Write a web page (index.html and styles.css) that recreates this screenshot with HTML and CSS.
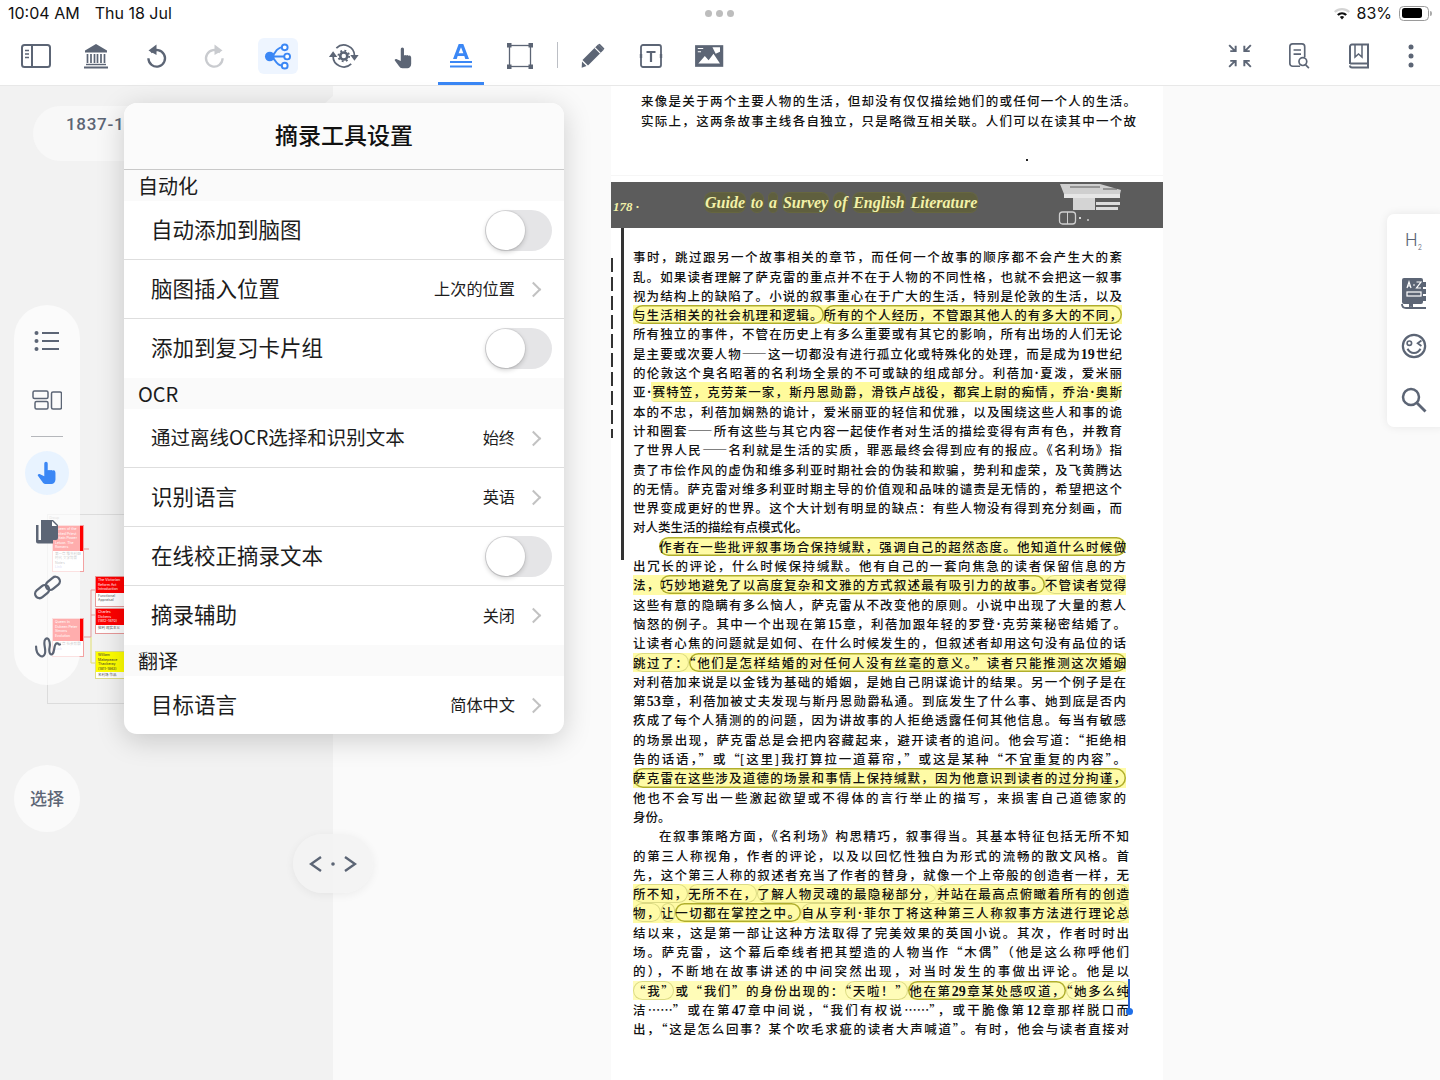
FILE: index.html
```html
<!DOCTYPE html>
<html lang="zh-CN">
<head>
<meta charset="utf-8">
<title>摘录工具设置</title>
<link rel="stylesheet" href="styles.css">
</head>
<body>
<div class="app">
  <header class="status">
    <div class="status-left"><span>10:04 AM</span><span>Thu 18 Jul</span></div>
    <div class="status-dots"><i></i><i></i><i></i></div>
    <div class="status-right">
      <svg class="wifi" viewBox="0 0 18 14"><path d="M1 5.2a11.6 11.6 0 0 1 16 0l-1.5 1.6a9.4 9.4 0 0 0-13 0z" fill="#d4d4d4"/><path d="M4 8.2a7.3 7.3 0 0 1 10 0l-1.6 1.6a5 5 0 0 0-6.8 0z" fill="#111"/><path d="M6.8 11a3.2 3.2 0 0 1 4.4 0L9 13.4z" fill="#111"/></svg>
      <span>83%</span>
      <span class="battery"><span class="battery-fill"></span></span>
      <span class="battery-nub"></span>
    </div>
  </header>

  <nav class="toolbar">
    <div class="tools">
      <button class="tool"><svg viewBox="0 0 32 26"><rect x="2" y="2" width="28" height="22" rx="2.5" fill="none" stroke="#5c6575" stroke-width="2"/><path d="M12 2v22" stroke="#5c6575" stroke-width="2"/><path d="M5 7.500h4M5 11h4M5 14.500h4" stroke="#5c6575" stroke-width="1.300"/></svg></button>
      <button class="tool"><svg viewBox="0 0 26 26"><path d="M13 1 2 7.500v2h22v-2z" fill="#5c6575"/><path d="M4.500 11v9M8 11v9M11.500 11v9M14.500 11v9M18 11v9M21.500 11v9" stroke="#5c6575" stroke-width="1.700"/><path d="M3 21.500h20" stroke="#5c6575" stroke-width="1.400"/><path d="M1 24.500h24" stroke="#5c6575" stroke-width="2"/></svg></button>
      <button class="tool"><svg viewBox="0 0 24 26"><path d="M7 9.300a8.300 8.300 0 1 1-2.600 6" fill="none" stroke="#5c6575" stroke-width="2.300"/><path d="M12.500 1.500v10.500L4.500 7.500z" fill="#5c6575"/></svg></button>
      <button class="tool"><svg viewBox="0 0 24 26"><path d="M17 9.300a8.300 8.300 0 1 0 2.600 6" fill="none" stroke="#c9cbcf" stroke-width="2.300"/><path d="M11.500 1.500v10.500l8-4.500z" fill="#c9cbcf"/></svg></button>
      <button class="tool tool-active"><svg viewBox="0 0 30 28"><circle cx="6" cy="14" r="5" fill="#3b87f5"/><path d="M6 14c6 0 5-9.500 13-9.500M6 14h15M6 14c6 0 5 9.500 13 9.500" fill="none" stroke="#3b87f5" stroke-width="2"/><circle cx="21.500" cy="4.500" r="3" fill="#fff" stroke="#3b87f5" stroke-width="2"/><circle cx="24" cy="14" r="3" fill="#fff" stroke="#3b87f5" stroke-width="2"/><circle cx="21.500" cy="23.500" r="3" fill="#fff" stroke="#3b87f5" stroke-width="2"/></svg></button>
      <button class="tool"><svg viewBox="0 0 34 28"><path d="M9 5.500A11.500 11.500 0 0 1 28.500 14M25 22.500A11.500 11.500 0 0 1 5.500 14" fill="none" stroke="#5c6575" stroke-width="1.900"/><path d="M1 15h9L5.500 9zM24 13h9l-4.500 6z" fill="#5c6575"/><circle cx="17" cy="14" r="3.800" fill="none" stroke="#5c6575" stroke-width="2.800"/><circle cx="17" cy="14" r="5.800" fill="none" stroke="#5c6575" stroke-width="2" stroke-dasharray="2 2.550"/></svg></button>
      <button class="tool tool-hand"><svg viewBox="0 0 22 26"><path d="M8 2.500a1.900 1.900 0 0 1 3.800 0V10l1.500-.4 1 .4 1.500-.4 1.200.6 1.500-.1c1.200.4 1.800 1.400 1.800 3v7c0 3-2 5-4.500 5H10c-2 0-3-.8-4-2.300l-5-6.700c-.7-1.400 1-2.700 2.400-1.700L8 16.500z" fill="#5c6575"/></svg></button>
      <button class="tool tool-a"><svg viewBox="0 0 24 26"><path d="M9.700 1h4.600L20 16h-3.700l-1-3H8.700l-1 3H4zm-.1 9.200h4.800L12 4.300z" fill="#3b87f5" fill-rule="evenodd"/><path d="M1 19h22M1 23.500h22" stroke="#3b87f5" stroke-width="1.800"/></svg></button>
      <button class="tool"><svg viewBox="0 0 26 26"><rect x="2.500" y="2.500" width="21" height="21" fill="none" stroke="#5c6575" stroke-width="1.300"/><path d="M0 0h4.500v4.500H0zM21.500 0H26v4.500h-4.500zM0 21.500h4.500V26H0zM21.500 21.500H26V26h-4.500z" fill="#5c6575"/></svg></button>
      <span class="tool-sep"></span>
      <button class="tool"><svg viewBox="0 0 26 26"><path d="M19 1.500 24.500 7 9 22.500l-5.500-5.500z" fill="#5c6575"/><path d="M19 1.500l1.700-.8 4.700 4.700-.9 1.600zM3 18.500l4.500 4.500-4.800 1.800z" fill="#5c6575"/><path d="M15.800 4.700l5.500 5.500" stroke="#fff" stroke-width="1.200"/></svg></button>
      <button class="tool"><svg viewBox="0 0 24 26"><rect x="2" y="2" width="20" height="22" rx="2" fill="none" stroke="#5c6575" stroke-width="1.800"/><path d="M7.500 8h9v2h-3.400v9h-2.200v-9H7.500z" fill="#5c6575"/><path d="M.8 11h2.400v4H.8zM20.800 11h2.400v4h-2.400z" fill="#5c6575"/></svg></button>
      <button class="tool"><svg viewBox="0 0 28 24"><path d="M1 2h26v20H1z" fill="#5c6575"/><path d="M4 19l6-7 3.500 4 4.500-6 6 9z" fill="#fff"/><path d="M17 4h7v4l-4 2z" fill="#fff"/><path d="M3.500 5h5M3.500 8h3" stroke="#fff" stroke-width="1"/></svg></button>
    </div>
    <div class="tools-right">
      <button class="tool"><svg viewBox="0 0 24 24"><path d="M2 2l5.500 5.500M3 7.500h5V2.500M22 2l-5.500 5.500M21 7.500h-5V2.500M2 22l5.500-5.500M3 16.500h5v5M22 22l-5.500-5.500M21 16.500h-5v5" fill="none" stroke="#5c6575" stroke-width="1.800"/></svg></button>
      <button class="tool"><svg viewBox="0 0 24 28"><path d="M13 25H5a3 3 0 0 1-3-3V4a3 3 0 0 1 3-3h10a3 3 0 0 1 3 3v11" fill="none" stroke="#5c6575" stroke-width="1.800"/><path d="M6 7.500h8M6 12h8" stroke="#5c6575" stroke-width="1.800"/><circle cx="16" cy="20" r="4.200" fill="#fff" stroke="#5c6575" stroke-width="1.800"/><path d="M19 23.500l3.500 3.500" stroke="#5c6575" stroke-width="1.800"/></svg></button>
      <button class="tool"><svg viewBox="0 0 22 26"><path d="M2 21V3.500A2 2 0 0 1 4 1.500h16v23H4A2 2 0 0 1 2 22.500" fill="none" stroke="#5c6575" stroke-width="2"/><path d="M2 20.500h18" stroke="#5c6575" stroke-width="2"/><path d="M7 2v12l3.500-3 3.500 3V2" fill="none" stroke="#5c6575" stroke-width="1.500"/></svg></button>
      <button class="tool"><svg viewBox="0 0 8 26"><circle cx="4" cy="4" r="2.500" fill="#5c6575"/><circle cx="4" cy="13" r="2.500" fill="#5c6575"/><circle cx="4" cy="22" r="2.500" fill="#5c6575"/></svg></button>
    </div>
    <span class="popover-arrow"></span>
  </nav>

  <main class="workspace">
    <section class="map">
      <div class="map-pill">1837-1901</div>

      <div class="mm-frame"></div>
      <svg class="mm-links" viewBox="0 0 124 200"><path d="M38 35h5M38 123h7M45 76V123M45 76h4M45 101h4" fill="none" stroke="#e39a9a" stroke-width="1"/><path d="M45 123V149h4" fill="none" stroke="#e0de70" stroke-width="1"/></svg>
      <span class="mm-tag">Group</span>
      <div class="mm-node mm-a"><div class="mm-title mm-red mm-tall">Queen of the United Priest Britain Power Leiuor. The Romans</div><div class="mm-body">第一章 维多利亚时代 文学背景 Notes<em>Link</em></div></div>
      <div class="mm-node mm-b"><div class="mm-title mm-red mm-tall">Queen in Dukeen Peter Simons Evolution</div><div class="mm-body">第二章 社会背景<em>Link</em></div></div>
      <div class="mm-node mm-c"><div class="mm-title mm-red">The Victorian Reform Act Introduction</div><div class="mm-body">Functional Appraisal</div></div>
      <div class="mm-node mm-d"><div class="mm-title mm-red">Charles Dickens (1812-1870)</div><div class="mm-body">批判 现实主义</div></div>
      <div class="mm-node mm-e"><div class="mm-title mm-yellow">William Makepeace Thackeray (1811-1863)</div><div class="mm-body">名利场 作品</div></div>

      <aside class="rail">
        <svg class="rail-icon" viewBox="0 0 26 22"><circle cx="2.500" cy="3" r="2" fill="#5c6575"/><circle cx="2.500" cy="11" r="2" fill="#5c6575"/><circle cx="2.500" cy="19" r="2" fill="#5c6575"/><path d="M8 3h17M8 11h17M8 19h17" stroke="#5c6575" stroke-width="1.800"/></svg>
        <svg class="rail-icon" viewBox="0 0 30 20"><rect x="1" y="1" width="15" height="7.500" rx="1.500" fill="none" stroke="#5c6575" stroke-width="1.500"/><rect x="3" y="11.500" width="13" height="7.500" rx="1.500" fill="none" stroke="#5c6575" stroke-width="1.500"/><rect x="19.500" y="2" width="10" height="17" rx="1.500" fill="none" stroke="#5c6575" stroke-width="1.500"/></svg>
        <span class="rail-sep"></span>
        <span class="rail-active"><svg viewBox="0 0 22 26"><path d="M8 2.500a1.900 1.900 0 0 1 3.800 0V10l1.500-.4 1 .4 1.500-.4 1.200.6 1.500-.1c1.200.4 1.800 1.400 1.800 3v7c0 3-2 5-4.500 5H10c-2 0-3-.8-4-2.300l-5-6.700c-.7-1.400 1-2.700 2.400-1.700L8 16.500z" fill="#3b87f5"/></svg></span>
        <svg class="rail-icon rail-copy" viewBox="0 0 24 26"><path d="M1 6h2.500v15H18v3.500H3A2 2 0 0 1 1 22.500z" fill="#5c6575"/><path d="M6 1h12l5 5v13a2 2 0 0 1-2 2H6z" fill="#5c6575"/><path d="M17 2v5h5z" fill="#fff"/></svg>
        <svg class="rail-icon rail-link" viewBox="0 0 26 26"><g fill="none" stroke="#5c6575" stroke-width="2.200" transform="rotate(-40 13 13)"><rect x="-1" y="8.500" width="15" height="8.500" rx="4.200"/><rect x="12" y="9" width="15" height="8.500" rx="4.200"/></g></svg>
        <svg class="rail-icon rail-wave" viewBox="0 0 26 26"><path d="M2 14c0 9 7 12 8.500 7S8 10 11 7s5 3 4 8 1 8 3 6 1-9 3.500-10 2 2 3.500 1" fill="none" stroke="#5c6575" stroke-width="2.100" stroke-linecap="round"/></svg>
      </aside>

      <button class="select-btn">选择</button>
    </section>

    <section class="gutter"></section>

    <article class="page">
      <div class="scan-top">
        <div class="line line-clip">与其说这部小说只是关于两个主要人物的生活，但事实上却有许多其他人物出现并</div>
        <div class="line">来像是关于两个主要人物的生活，但却没有仅仅描绘她们的或任何一个人的生活。</div>
        <div class="line">实际上，这两条故事主线各自独立，只是略微互相关联。人们可以在读其中一个故</div>
        <span class="speck"></span>
      </div>
      <div class="band">
        <span class="band-no">178 ·</span>
        <span class="band-title"><b>Guide</b> <b>to</b> <b>a</b> <b>Survey</b> <b>of</b> <b>English</b> <b>Literature</b></span>
        <svg class="band-bus" viewBox="0 0 65 43"><path d="M2 2h40l21 6-1 4H6z" fill="#cfcfcf"/><path d="M12 5h30M45 7h14" stroke="#5c5c5c" stroke-width="1"/><path d="M6 12h56v4H6z" fill="#e6e6e6"/><path d="M15 16h22v12H15z" fill="#d4d4d4"/><path d="M38 20h24v3H38zM38 25h22v3H38z" fill="#dcdcdc"/><rect x="1.500" y="30" width="16" height="12" rx="3" fill="none" stroke="#cfcfcf" stroke-width="1.300"/><path d="M9.500 30v12" stroke="#cfcfcf"/><circle cx="22" cy="36" r="1" fill="#fff"/><circle cx="30" cy="38" r="1" fill="#ccc"/></svg>
      </div>
      <div class="body-wrap">
        <span class="scan-bar"></span>
        <span class="scan-dash"></span>

        <div class="para para-a">
          <div class="line">事时，跳过跟另一个故事相关的章节，而任何一个故事的顺序都不会产生大的紊</div>
          <div class="line">乱。如果读者理解了萨克雷的重点并不在于人物的不同性格，也就不会把这一叙事</div>
          <div class="line">视为结构上的缺陷了。小说的叙事重心在于广大的生活，特别是伦敦的生活，以及</div>
          <div class="line mark"><span class="ol">与生活相关的社会机理和逻辑。</span><span class="ol">所有的个人经历，不管跟其他人的有多大的不同，</span></div>
          <div class="line">所有独立的事件，不管在历史上有多么重要或有其它的影响，所有出场的人们无论</div>
          <div class="line">是主要或次要人物——这一切都没有进行孤立化或特殊化的处理，而是成为<span class="sf">19</span>世纪</div>
          <div class="line">的伦敦这个臭名昭著的名利场全景的不可或缺的组成部分。利蓓加<span class="sf">·</span>夏泼，爱米丽</div>
          <div class="line">亚<span class="sf">·</span><span class="hl">赛特笠，克劳莱一家，斯丹恩勋爵，滑铁卢战役，都宾上尉的痴情，乔治<span class="sf">·</span>奥斯</span></div>
          <div class="line">本的不忠，利蓓加娴熟的诡计，爱米丽亚的轻信和优雅，以及围绕这些人和事的诡</div>
          <div class="line">计和圈套——所有这些与其它内容一起使作者对生活的描绘变得有声有色，并教育</div>
          <div class="line">了世界人民——名利就是生活的实质，罪恶最终会得到应有的报应。《名利场》指</div>
          <div class="line">责了市侩作风的虚伪和维多利亚时期社会的伪装和欺骗，势利和虚荣，及飞黄腾达</div>
          <div class="line">的无情。萨克雷对维多利亚时期主导的价值观和品味的谴责是无情的，希望把这个</div>
          <div class="line">世界变成更好的世界。这个大计划有明显的缺点：有些人物没有得到充分刻画，而</div>
          <div class="line line-end">对人类生活的描绘有点模式化。</div>
        </div>

        <div class="para para-b">
          <div class="line line-indent"><span class="ol ol-full">作者在一些批评叙事场合保持缄默，强调自己的超然态度。他知道什么时候做</span></div>
          <div class="line">出冗长的评论，什么时候保持缄默。他有自己的一套向焦急的读者保留信息的方</div>
          <div class="line mark"><span>法，</span><span class="ol">巧妙地避免了以高度复杂和文雅的方式叙述最有吸引力的故事。</span><span class="ol-lt">不管读者觉得</span></div>
          <div class="line">这些有意的隐瞒有多么恼人，萨克雷从不改变他的原则。小说中出现了大量的惹人</div>
          <div class="line">恼怒的例子。其中一个出现在第<span class="sf">15</span>章，利蓓加跟年轻的罗登<span class="sf">·</span>克劳莱秘密结婚了。</div>
          <div class="line">让读者心焦的问题就是如何、在什么时候发生的，但叙述者却用这句没有品位的话</div>
          <div class="line mark"><span class="ol-lt">跳过了：</span><span class="ol">“他们是怎样结婚的对任何人没有丝毫的意义。”读者只能推测这次婚姻</span></div>
          <div class="line">对利蓓加来说是以金钱为基础的婚姻，是她自己阴谋诡计的结果。另一个例子是在</div>
          <div class="line">第<span class="sf">53</span>章，利蓓加被丈夫发现与斯丹恩勋爵私通。到底发生了什么事、她到底是否内</div>
          <div class="line">疚成了每个人猜测的的问题，因为讲故事的人拒绝透露任何其他信息。每当有敏感</div>
          <div class="line">的场景出现，萨克雷总是会把内容藏起来，避开读者的追问。他会写道：“拒绝相</div>
          <div class="line">告的话语，”或“[这里]我打算拉一道幕帘，”或这是某种“不宜重复的内容”。</div>
          <div class="line mark"><span class="ol ol-full">萨克雷在这些涉及道德的场景和事情上保持缄默，因为他意识到读者的过分拘谨，</span></div>
          <div class="line">他也不会写出一些激起欲望或不得体的言行举止的描写，来损害自己道德家的</div>
          <div class="line line-end">身份。</div>
        </div>

        <div class="para para-c">
          <div class="line line-indent">在叙事策略方面，《名利场》构思精巧，叙事得当。其基本特征包括无所不知</div>
          <div class="line">的第三人称视角，作者的评论，以及以回忆性独白为形式的流畅的散文风格。首</div>
          <div class="line">先，这个第三人称的叙述者充当了作者的替身，就像一个上帝般的创造者一样，无</div>
          <div class="line mark"><span class="ol-lt">所不知，</span><span class="ol-lt">无所不在，</span><span class="ol-lt">了解人物灵魂的最隐秘部分，</span><span class="ol-lt">并站在最高点俯瞰着所有的创造</span></div>
          <div class="line mark"><span class="ol-lt">物，</span><span class="ol-lt">让</span><span class="ol">一切都在掌控之中。</span><span class="ol-lt">自从亨利<span class="sf">·</span>菲尔丁将这种第三人称叙事方法进行理论总</span></div>
          <div class="line">结以来，这是第一部让这种方法取得了完美效果的英国小说。其次，作者时时出</div>
          <div class="line">场。萨克雷，这个幕后牵线者把其塑造的人物当作“木偶”（他是这么称呼他们</div>
          <div class="line">的），不断地在故事讲述的中间突然出现，对当时发生的事做出评论。他是以</div>
          <div class="line mark mark-lt"><span class="ol-lt">“我”</span>或“我们”的身份出现的：<span class="ol-lt">“天啦！”</span><span class="ol">他在第<span class="sf">29</span>章某处感叹道，</span><span class="ol-lt">“她多么纯</span></div>
          <div class="line">洁……”或在第<span class="sf">47</span>章中间说，“我们有权说……”，或干脆像第<span class="sf">12</span>章那样脱口而</div>
          <div class="line">出，“这是怎么回事？某个吹毛求疵的读者大声喊道”。有时，他会与读者直接对</div>
        </div>
        <span class="sel-handle"></span>
      </div>
    </article>

    <section class="gutter-right"></section>
  </main>

  <div class="popover">
    <h2 class="pop-title">摘录工具设置</h2>
    <div class="pop-section">自动化</div>
    <div class="pop-row"><span class="pop-label">自动添加到脑图</span><span class="toggle"><i></i></span></div>
    <div class="pop-row"><span class="pop-label">脑图插入位置</span><span class="pop-value">上次的位置</span><span class="chev"></span></div>
    <div class="pop-row pop-last"><span class="pop-label">添加到复习卡片组</span><span class="toggle"><i></i></span></div>
    <div class="pop-section">OCR</div>
    <div class="pop-row"><span class="pop-label pop-label-sm">通过离线OCR选择和识别文本</span><span class="pop-value">始终</span><span class="chev"></span></div>
    <div class="pop-row"><span class="pop-label">识别语言</span><span class="pop-value">英语</span><span class="chev"></span></div>
    <div class="pop-row"><span class="pop-label">在线校正摘录文本</span><span class="toggle"><i></i></span></div>
    <div class="pop-row pop-last"><span class="pop-label">摘录辅助</span><span class="pop-value">关闭</span><span class="chev"></span></div>
    <div class="pop-section">翻译</div>
    <div class="pop-row pop-last pop-end"><span class="pop-label">目标语言</span><span class="pop-value">简体中文</span><span class="chev"></span></div>
  </div>

  <div class="nav-pill">
    <svg viewBox="0 0 48 18"><path d="M12 2 2 9l10 7M36 2l10 7-10 7" fill="none" stroke="#5c6575" stroke-width="2.400"/><circle cx="24" cy="9" r="1.800" fill="#5c6575"/></svg>
  </div>

  <aside class="side-panel">
    <span class="side-h">H<sub>2</sub></span>
    <svg class="side-icon" viewBox="0 0 26 32"><rect x="1" y="1" width="21" height="26" rx="2" fill="#5c6575"/><path d="M1 27c0 3 2 4 4 4h20" fill="none" stroke="#5c6575" stroke-width="1.800"/><path d="M8 27v4l2-1.500 2 1.500v-4z" fill="#5c6575"/><path d="M22 5h3v5h-3zM22 12h3v5h-3zM22 19h3v5h-3z" fill="#5c6575"/><rect x="6" y="15" width="14" height="4" fill="none" stroke="#fff" stroke-width="1.200"/><path d="M6 11l2-6 2 6M7 9h2M12 8h2M15.500 5H20l-4.500 6H20" fill="none" stroke="#fff" stroke-width="1.200"/></svg>
    <svg class="side-icon" viewBox="0 0 28 28"><circle cx="14" cy="14" r="12" fill="none" stroke="#5c6575" stroke-width="2.400"/><circle cx="9" cy="11" r="2.400" fill="none" stroke="#5c6575" stroke-width="1.800"/><path d="M22 8l-4 3 4 3" fill="none" stroke="#5c6575" stroke-width="2"/><path d="M7 17c3 6 11 6 14 0" fill="none" stroke="#5c6575" stroke-width="2.200"/></svg>
    <svg class="side-icon" viewBox="0 0 26 26"><circle cx="10" cy="10" r="8" fill="none" stroke="#5c6575" stroke-width="2.500"/><path d="M16 16l8.500 8.500" stroke="#5c6575" stroke-width="2.800"/></svg>
  </aside>
</div>
</body>
</html>
```

FILE: styles.css
```css
* { box-sizing: border-box; }
html, body { margin: 0; padding: 0; }
body { font-family: "Inter", "Noto Sans CJK SC", sans-serif; color: #111; background: #fff; }
button { border: 0; background: none; padding: 0; font: inherit; color: inherit; }

.app { position: relative; width: 1440px; height: 1080px; overflow: hidden; display: flex; flex-direction: column; }

/* status bar */
.status { height: 28px; flex: none; display: flex; align-items: center; justify-content: space-between; padding: 0 8px 2px 8px; font-size: 16px; position: relative; background: #fff; z-index: 3; }
.status-left { display: flex; gap: 15px; }
.status-dots { position: absolute; left: 705px; top: 10px; display: flex; gap: 4px; }
.status-dots i { width: 7px; height: 7px; border-radius: 50%; background: #bdbdbd; }
.status-right { display: flex; align-items: center; gap: 6px; }
.wifi { width: 18px; height: 14px; }
.battery { width: 30px; height: 15px; border: 1px solid #9a9a9a; border-radius: 4.5px; padding: 1.500px; display: block; margin-left: 1px; }
.battery-fill { display: block; width: 83%; height: 100%; background: #000; border-radius: 2.500px; }
.battery-nub { width: 2px; height: 5px; background: #aaa; margin-left: -5px; border-radius: 0 2px 2px 0; }

/* toolbar */
.toolbar { height: 58px; flex: none; display: flex; justify-content: space-between; align-items: stretch; background: #fff; border-bottom: 1px solid #e8e8e8; position: relative; z-index: 3; }
.tools { margin-left: 6px; display: grid; grid-template-columns: 60px 60px 60px 58px 68px 64px 54px 62px 56px 18px 52px 66px 50px; height: 57px; }
.tools-right { display: grid; grid-template-columns: 60px 58px 62px 42px; margin-right: 8px; height: 57px; }
.tool { position: relative; display: flex; align-items: center; justify-content: center; height: 56px; }
.tool svg { display: block; height: 26px; width: auto; }
.tool-hand svg { height: 22px; margin-top: 3px; }
.tool-active::before { content: ""; position: absolute; left: 14px; top: 10px; width: 40px; height: 36px; background: #eef5ff; border-radius: 6px; }
.tool-active svg { position: relative; height: 27px; }
.tool-a::after { content: ""; position: absolute; left: 8px; right: 8px; bottom: -1px; height: 3px; background: #3b87f5; }
.tool-sep { width: 1px; height: 26px; margin: 14px 0 0 9px; background: #bcbfc5; }
.popover-arrow { position: absolute; left: 324px; top: 58px; width: 0; height: 0; border-left: 20px solid transparent; border-right: 20px solid transparent; border-bottom: 18px solid #fafafa; z-index: 5; }

/* workspace */
.workspace { flex: 1; display: flex; min-height: 0; }
.map { position: relative; width: 333px; background: #f2f2f2; flex: none; }
.gutter { width: 278px; background: #fafafa; flex: none; }
.gutter-right { flex: 1; background: #fafafa; }

.map-pill { position: absolute; left: 33px; top: 20px; width: 200px; height: 55px; border-radius: 28px; background: #f8f8f8; padding: 8px 0 0 33px; font-family: "Roboto", sans-serif; font-weight: 500; font-size: 17px; letter-spacing: .7px; color: #5c6575; }

/* mind map */
.mm-frame { position: absolute; left: 47px; top: 428px; width: 140px; height: 190px; border: 1px solid #dcdcdc; }
.mm-links { position: absolute; left: 46px; top: 428px; width: 124px; height: 200px; }
.mm-tag { position: absolute; left: 49px; top: 430px; font-size: 3.500px; color: #999; }
.mm-node { position: absolute; overflow: hidden; background: #fff; font-size: 3.500px; line-height: 1.3; border: 1px solid; }
.mm-title { padding: 1px 2px; }
.mm-body { padding: 1px 2px; color: #555; }
.mm-body em { display: block; color: #8a8ae0; font-style: normal; }
.mm-tall { min-height: 22px; }
.mm-red { background: #f00; color: #fff; }
.mm-yellow { background: #ff0; color: #333; }
.mm-a { left: 52px; top: 439px; width: 32px; height: 47px; border-color: #f3a2a2; }
.mm-b { left: 52px; top: 532px; width: 32px; height: 39px; border-color: #f3a2a2; }
.mm-c { left: 95px; top: 490px; width: 29px; height: 31px; border-color: #e89999; border-right: 0; }
.mm-d { left: 95px; top: 522px; width: 29px; height: 26px; border-color: #e89999; border-right: 0; }
.mm-e { left: 95px; top: 565px; width: 29px; height: 28px; border-color: #dddd88; border-right: 0; }

/* left rail */
.rail { position: absolute; left: 14px; top: 219px; width: 66px; height: 380px; border-radius: 33px; background: rgba(255,255,255,.68); display: flex; flex-direction: column; align-items: center; z-index: 1; padding-top: 25px; }
.rail-icon { display: block; width: 26px; height: 22px; flex: none; }
.rail-icon:nth-child(2) { width: 30px; height: 20px; margin-top: 38px; }
.rail-sep { width: 32px; height: 1px; background: #b5b7bb; margin-top: 26px; flex: none; }
.rail-active { width: 44px; height: 44px; border-radius: 50%; background: #e8f3ff; margin-top: 14px; display: flex; align-items: center; justify-content: center; flex: none; }
.rail-active svg { width: 20px; height: 24px; }
.rail-copy { width: 24px; height: 26px; margin-top: 24px; }
.rail-link { width: 27px; height: 27px; margin-top: 29px; }
.rail-wave { width: 27px; height: 27px; margin-top: 31px; }

.select-btn { position: absolute; left: 14px; top: 679px; width: 66px; height: 67px; border-radius: 50%; background: #fafafa; padding-bottom: 3px; font-family: "Noto Sans CJK SC", sans-serif; font-size: 17px; font-weight: 500; color: #5c6575; }

/* scanned page */
.page { position: relative; width: 552px; flex: none; background: #fff; overflow: hidden; font-family: "Noto Sans CJK SC", sans-serif; font-size: 12.500px; font-weight: 500; color: #111; }
.line { height: 19.300px; line-height: 19.300px; white-space: nowrap; text-align: justify; text-align-last: justify; }
.line-clip { margin: -17px 0 3px; }
.line-end { text-align: left; text-align-last: left; }
.line-indent { padding-left: 26px; }
.sf { font-family: "Liberation Serif", serif; font-weight: 700; font-size: 14px; }
.scan-top { display: flow-root; position: relative; height: 90px; padding: 0 27px 0 30px; border-bottom: 1px solid #f6f6f6; margin-bottom: 6px; }
.speck { position: absolute; left: 415px; top: 73px; width: 2px; height: 2px; background: #222; }

.band { height: 46px; background: #5c5c5c; display: flex; align-items: center; position: relative; }
.band-no { font-family: "Liberation Serif", serif; font-style: italic; font-weight: 700; font-size: 13px; color: #f2f1a8; margin: 4px 0 0 2px; width: 92px; flex: none; }
.band-title { font-family: "Liberation Serif", serif; font-style: italic; font-weight: 700; font-size: 16px; color: #f2f1a8; margin-top: -4px; word-spacing: 1.800px; }
.band-title b { background: #5f5f3e; border-radius: 7px; padding: 1px 0; box-shadow: 0 0 0 1px #66663f; }
.band-bus { position: absolute; left: 447px; top: 0; width: 65px; height: 43px; }

.body-wrap { position: relative; padding: 19.300px 0 0 22px; }
.para-a { width: 489px; }
.para-b { width: 493px; }
.para-c { width: 496px; }
.scan-bar { position: absolute; left: 10px; top: 0; width: 3px; height: 332px; background: #333; }
.scan-dash { position: absolute; left: 0; top: 30px; width: 2px; height: 180px; background: repeating-linear-gradient(#333 0 14px, transparent 14px 19px); }

.mark { background: #fffba6; }
.mark-lt { background: #fffcb8; }
.hl { background: #fffb9c; border-radius: 0 0 10px 4px; box-shadow: 0 1px 0 #e6e69a; }
.ol, .ol-lt { border-radius: 10px; }
.ol { box-shadow: inset 0 0 0 1.500px #b0ae2c; }
.ol-lt { box-shadow: inset 0 0 0 1px #dcdb84; }
.ol-full { background: #fffba6; display: block; }
.sel-handle { position: absolute; left: 517px; top: 751px; width: 2px; height: 33px; background: #1f5fd8; }
.sel-handle::after { content: ""; position: absolute; left: -2.500px; bottom: -3px; width: 7px; height: 7px; border-radius: 50%; background: #1f6fe8; }

/* popover */
.popover { position: absolute; left: 124px; top: 103px; width: 440px; height: 631px; background: #fff; border-radius: 13px; overflow: hidden; box-shadow: 0 6px 28px rgba(0,0,0,.18); z-index: 4; font-family: "Noto Sans CJK SC", sans-serif; color: #1c1c1c; }
.pop-title { margin: 0; height: 67px; padding-bottom: 4px; display: flex; align-items: center; justify-content: center; background: #fbfbfb; border-bottom: 1px solid #c9c9c9; font-size: 23px; font-weight: 500; color: #111; }
.pop-section { height: 31px; background: #fafafa; padding-left: 14px; font-size: 20px; font-weight: 400; line-height: 31px; }
.pop-row { height: 59px; display: flex; align-items: center; padding: 0 25px 0 27px; border-bottom: 1px solid #dedede; }
.pop-last { border-bottom: 0; }
.pop-end { height: 58px; }
.pop-label { flex: 1; padding-bottom: 4px; font-size: 21.500px; font-weight: 400; white-space: nowrap; }
.pop-label-sm { font-size: 19.500px; }
.pop-value { padding-bottom: 2px; font-size: 16.200px; font-weight: 400; }
.chev { width: 11px; height: 11px; margin-left: 13px; border-top: 2px solid #c2c2c2; border-right: 2px solid #c2c2c2; transform: rotate(45deg); }
.toggle { position: relative; width: 67px; height: 41px; border-radius: 21px; background: #e5e5e7; margin-right: -13px; flex: none; }
.toggle i { position: absolute; left: 1px; top: 1px; width: 39px; height: 39px; border-radius: 50%; background: #fff; box-shadow: 0 2px 5px rgba(0,0,0,.2), 0 0 0 1px rgba(0,0,0,.05); }

/* floating */
.nav-pill { position: absolute; left: 293px; top: 834px; width: 80px; height: 59px; border-radius: 30px; background: rgba(243,243,243,.92); box-shadow: 0 2px 10px rgba(0,0,0,.06); display: flex; align-items: center; justify-content: center; z-index: 2; }
.nav-pill svg { width: 48px; height: 18px; }
.side-panel { position: absolute; left: 1387px; top: 214px; width: 60px; height: 213px; background: #fff; border-radius: 7px; box-shadow: 0 0 10px rgba(0,0,0,.08); z-index: 2; display: flex; flex-direction: column; align-items: center; padding: 16px 7px 0 0; }
.side-h { font-weight: 300; font-size: 17px; color: #5c6575; line-height: 20px; }
.side-h sub { font-size: 7px; }
.side-icon { display: block; width: 26px; height: 28px; margin-top: 24px; flex: none; }
.side-panel svg:nth-of-type(1) { margin-top: 19px; height: 32px; }
.side-panel svg:nth-of-type(2) { margin-top: 23px; }
.side-panel svg:nth-of-type(3) { margin-top: 26px; }
```
